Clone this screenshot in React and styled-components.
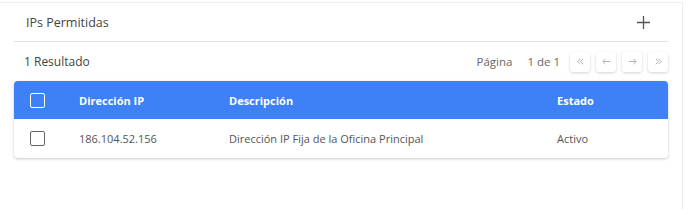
import React from "react";
import styled, { createGlobalStyle } from "styled-components";

const GlobalStyle = createGlobalStyle`
  body {
    margin: 0;
    background: #ffffff;
    font-family: "Open Sans", "Noto Sans", sans-serif;
  }
`;

const Page = styled.div`
  width: 688px;
  height: 209px;
  box-sizing: border-box;
  padding-top: 2px;
  overflow: hidden;
`;

const Card = styled.div`
  width: 684px;
  margin-left: -1px;
  box-sizing: border-box;
  border-top: 1px solid #ececec;
  border-right: 1px solid #ececec;
  padding: 0 14px 0 15px;
  height: 207px;
`;

const Header = styled.div`
  display: flex;
  align-items: center;
  justify-content: space-between;
  height: 38px;
  padding: 0 18px 0 12px;
  border-bottom: 1px solid #e2e2e2;
`;

const Title = styled.h2`
  margin: 0;
  font-size: 12.5px;
  font-weight: 400;
  color: #444;
`;

const AddButton = styled.button`
  border: none;
  background: none;
  padding: 0;
  display: flex;
  color: #555;
  cursor: pointer;
`;

const Toolbar = styled.div`
  display: flex;
  align-items: center;
  justify-content: space-between;
  height: 39px;
  padding: 0 0 0 10px;
`;

const Muted = styled.span`
  font-size: 12px;
  color: #444;
`;

const Pager = styled.div`
  display: flex;
  align-items: center;
`;

const PagerText = styled.span`
  font-size: 11.5px;
  color: #666;
  margin-right: ${(p) => p.$gap}px;
`;

const PageButton = styled.button`
  width: 20px;
  height: 20px;
  margin-left: 6px;
  padding: 0;
  display: flex;
  align-items: center;
  justify-content: center;
  border: none;
  border-radius: 3px;
  background: #fff;
  color: #999;
  box-shadow: 0 1px 3px rgba(0, 0, 0, 0.18);
`;

const Table = styled.table`
  width: 100%;
  table-layout: fixed;
  border-collapse: separate;
  border-spacing: 0;
  border-radius: 4px;
  box-shadow: 0 1px 3px rgba(0, 0, 0, 0.22);
`;

const Th = styled.th`
  background: #3e80f5;
  color: #fff;
  font-size: 11px;
  font-weight: 700;
  text-align: left;
  height: 38px;
  padding: 0;
  padding-left: ${(p) => p.$pl || 0}px;
  width: ${(p) => (p.$w ? `${p.$w}px` : "auto")};
  &:first-child {
    border-top-left-radius: 4px;
  }
  &:last-child {
    border-top-right-radius: 4px;
  }
`;

const Td = styled.td`
  font-size: 11px;
  color: #555;
  height: 39px;
  padding: 0;
  padding-left: ${(p) => p.$pl || 0}px;
`;

const Check = styled.span`
  display: block;
  width: 13px;
  height: 13px;
  border: 1.5px solid ${(p) => (p.$light ? "#fff" : "#666")};
  border-radius: 2px;
`;

const rows = [
  {
    ip: "186.104.52.156",
    desc: "Dirección IP Fija de la Oficina Principal",
    state: "Activo",
  },
];

const Arrow = ({ d }) => (
  <svg width="9" height="9" viewBox="0 0 10 10" fill="none" stroke="#aaa" strokeWidth="1">
    <path d={d} />
  </svg>
);

export default function App() {
  return (
    <Page>
      <GlobalStyle />
      <Card>
        <Header>
          <Title>IPs Permitidas</Title>
          <AddButton>
            <svg width="13" height="13" viewBox="0 0 13 13" stroke="#555" strokeWidth="1.3">
              <path d="M6.5 0v13M0 6.5h13" />
            </svg>
          </AddButton>
        </Header>
        <Toolbar>
          <Muted>1 Resultado</Muted>
          <Pager>
            <PagerText $gap={15}>Página</PagerText>
            <PagerText $gap={4}>1 de 1</PagerText>
            <PageButton>
              <Arrow d="M5 2L2 5l3 3M8 2L5 5l3 3" />
            </PageButton>
            <PageButton>
              <Arrow d="M9 5H1M4 2L1 5l3 3" />
            </PageButton>
            <PageButton>
              <Arrow d="M1 5h8M6 2l3 3-3 3" />
            </PageButton>
            <PageButton>
              <Arrow d="M2 2l3 3-3 3M5 2l3 3-3 3" />
            </PageButton>
          </Pager>
        </Toolbar>
        <Table>
          <thead>
            <tr>
              <Th $pl={16} $w={49}>
                <Check $light />
              </Th>
              <Th $w={150}>Dirección IP</Th>
              <Th $w={328}>Descripción</Th>
              <Th>Estado</Th>
            </tr>
          </thead>
          <tbody>
            {rows.map((r) => (
              <tr key={r.ip}>
                <Td $pl={16}>
                  <Check />
                </Td>
                <Td>{r.ip}</Td>
                <Td>{r.desc}</Td>
                <Td>{r.state}</Td>
              </tr>
            ))}
          </tbody>
        </Table>
      </Card>
    </Page>
  );
}
